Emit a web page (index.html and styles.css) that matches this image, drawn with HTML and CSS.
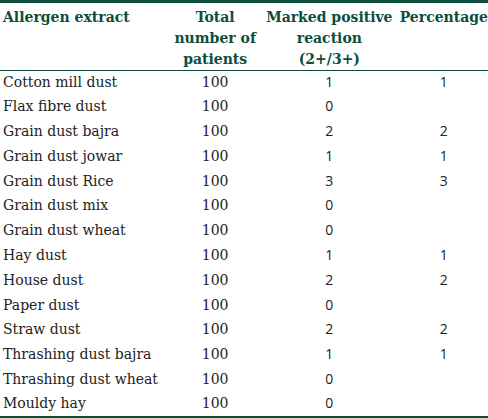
FILE: index.html
```html
<!DOCTYPE html>
<html lang="en">
<head>
    <meta charset="UTF-8">
    <title>Allergen extract reactions</title>
    <link rel="stylesheet" href="styles.css">
</head>
<body>
    <table class="data-table">
        <thead>
            <tr>
                <th class="col-name">Allergen extract</th>
                <th class="col-total">Total<br>number of<br>patients</th>
                <th class="col-marked">Marked positive<br>reaction<br>(2+/3+)</th>
                <th class="col-pct">Percentage</th>
            </tr>
        </thead>
        <tbody>
            <tr><td>Cotton mill dust</td><td class="num">100</td><td class="val">1</td><td class="val">1</td></tr>
            <tr><td>Flax fibre dust</td><td class="num">100</td><td class="val">0</td><td class="val"></td></tr>
            <tr><td>Grain dust bajra</td><td class="num">100</td><td class="val">2</td><td class="val">2</td></tr>
            <tr><td>Grain dust jowar</td><td class="num">100</td><td class="val">1</td><td class="val">1</td></tr>
            <tr><td>Grain dust Rice</td><td class="num">100</td><td class="val">3</td><td class="val">3</td></tr>
            <tr><td>Grain dust mix</td><td class="num">100</td><td class="val">0</td><td class="val"></td></tr>
            <tr><td>Grain dust wheat</td><td class="num">100</td><td class="val">0</td><td class="val"></td></tr>
            <tr><td>Hay dust</td><td class="num">100</td><td class="val">1</td><td class="val">1</td></tr>
            <tr><td>House dust</td><td class="num">100</td><td class="val">2</td><td class="val">2</td></tr>
            <tr><td>Paper dust</td><td class="num">100</td><td class="val">0</td><td class="val"></td></tr>
            <tr><td>Straw dust</td><td class="num">100</td><td class="val">2</td><td class="val">2</td></tr>
            <tr><td>Thrashing dust bajra</td><td class="num">100</td><td class="val">1</td><td class="val">1</td></tr>
            <tr><td>Thrashing dust wheat</td><td class="num">100</td><td class="val">0</td><td class="val"></td></tr>
            <tr><td>Mouldy hay</td><td class="num">100</td><td class="val">0</td><td class="val"></td></tr>
        </tbody>
    </table>
</body>
</html>
```

FILE: styles.css
```css
body {
    margin: 0;
    background-color: white;
    font-family: "DejaVu Serif", serif;
    color: #222;
}
.data-table {
    width: 488px;
    border-collapse: collapse;
    border-top: 3px solid #0d4d3c;
    border-bottom: 4px solid #0d4d3c;
    font-size: 14px;
}
th {
    color: #0d4d3c;
    font-weight: bold;
    line-height: 21px;
    vertical-align: top;
    padding: 4px 0 0 0;
    border-bottom: 1px solid #0d4d3c;
}
.col-name {
    width: 170px;
    text-align: left;
    padding-left: 3px;
}
.col-total {
    width: 88px;
    text-align: center;
}
.col-marked {
    width: 142px;
    text-align: center;
}
.col-pct {
    text-align: center;
}
td {
    height: 24.8px;
    padding: 0 0 3px 0;
    line-height: 20px;
    box-sizing: border-box;
}
td:first-child {
    padding-left: 3px;
}
.num {
    text-align: center;
}
.val {
    text-align: center;
    font-family: "Open Sans", sans-serif;
}
```
